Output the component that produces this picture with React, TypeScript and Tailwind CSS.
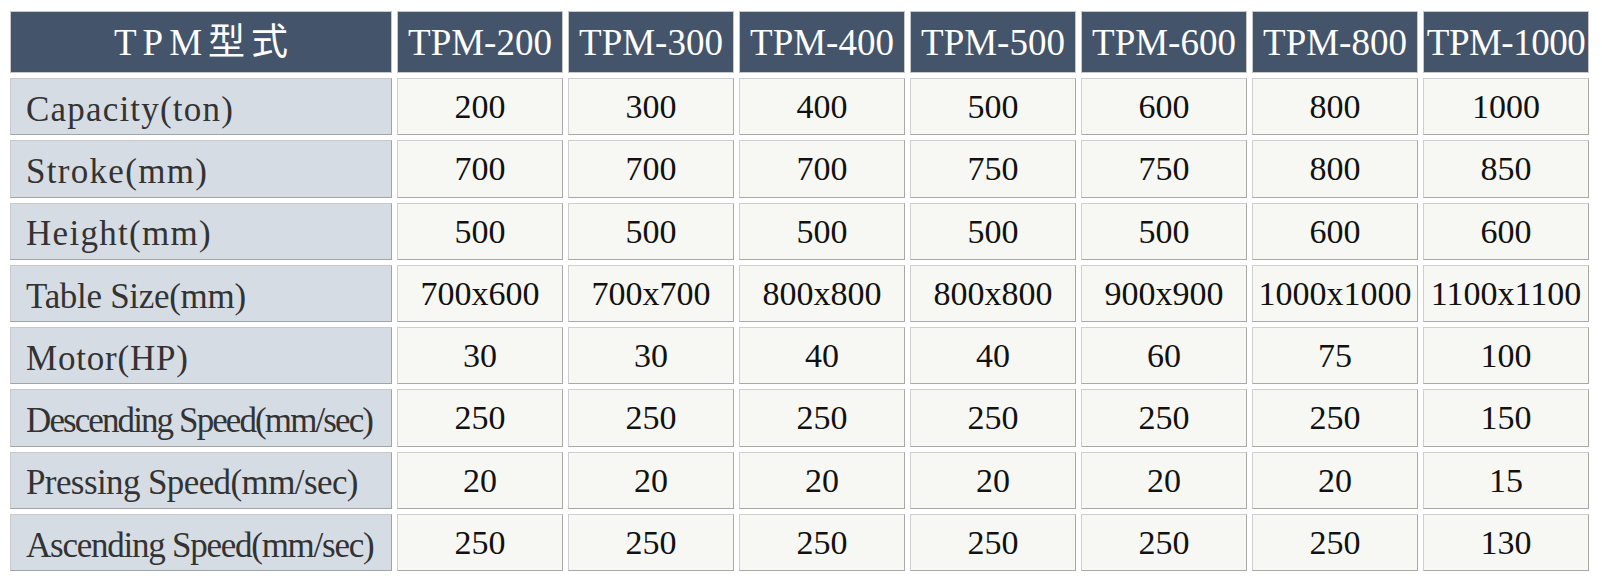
import React from "react";

const headers = ["TPM-200", "TPM-300", "TPM-400", "TPM-500", "TPM-600", "TPM-800", "TPM-1000"];

const rows: { label: string; cls: string; values: string[] }[] = [
  { label: "Capacity(ton)", cls: "tracking-[1.2px]", values: ["200", "300", "400", "500", "600", "800", "1000"] },
  { label: "Stroke(mm)", cls: "tracking-[1.3px]", values: ["700", "700", "700", "750", "750", "800", "850"] },
  { label: "Height(mm)", cls: "tracking-[1.3px]", values: ["500", "500", "500", "500", "500", "600", "600"] },
  { label: "Table Size(mm)", cls: "tracking-[-0.3px]", values: ["700x600", "700x700", "800x800", "800x800", "900x900", "1000x1000", "1100x1100"] },
  { label: "Motor(HP)", cls: "tracking-[0.8px]", values: ["30", "30", "40", "40", "60", "75", "100"] },
  { label: "Descending Speed(mm/sec)", cls: "tracking-[-1.9px]", values: ["250", "250", "250", "250", "250", "250", "150"] },
  { label: "Pressing Speed(mm/sec)", cls: "tracking-[-0.6px]", values: ["20", "20", "20", "20", "20", "20", "15"] },
  { label: "Ascending Speed(mm/sec)", cls: "tracking-[-1.25px]", values: ["250", "250", "250", "250", "250", "250", "130"] },
];

export default function App() {
  return (
    <div className="w-[1602px] h-[579px] bg-white pl-[10px] pt-[11px]">
      <div className="grid grid-cols-[382px_repeat(7,166px)] grid-rows-[62px_repeat(8,57.25px)] gap-[5px]">
        <div className="flex items-center justify-center bg-[#44546a] border border-[#c8c8c8] text-white text-[37px] leading-none font-['Liberation_Serif','Noto_Sans_CJK_JP',serif]">
          <span className="tracking-[6px] pl-[6px]">TPM型式</span>
        </div>
        {headers.map((h) => (
          <div
            key={h}
            className={
              "flex items-center justify-center bg-[#44546a] border border-[#c8c8c8] text-white text-[37px] leading-none font-['Liberation_Serif',serif] " +
              (h === "TPM-1000" ? "tracking-[-0.5px]" : "")
            }
          >
            {h}
          </div>
        ))}
        {rows.map((r) => (
          <React.Fragment key={r.label}>
            <div
              className={
                "flex items-center bg-[#d6dce4] border border-t-[#c9c9c9] border-l-[#c9c9c9] border-r-[#a3a3a3] border-b-[#a3a3a3] pl-[15px] pt-[7px] text-[#333333] text-[35px] whitespace-nowrap font-['Liberation_Serif',serif] " +
                r.cls
              }
            >
              {r.label}
            </div>
            {r.values.map((v, i) => (
              <div
                key={i}
                className="flex items-center justify-center bg-[#f7f8f3] border border-t-[#cfcfcf] border-l-[#cfcfcf] border-r-[#a8a8a8] border-b-[#a8a8a8] text-[#111111] text-[34px] whitespace-nowrap font-['Liberation_Serif',serif]"
              >
                {v}
              </div>
            ))}
          </React.Fragment>
        ))}
      </div>
    </div>
  );
}
